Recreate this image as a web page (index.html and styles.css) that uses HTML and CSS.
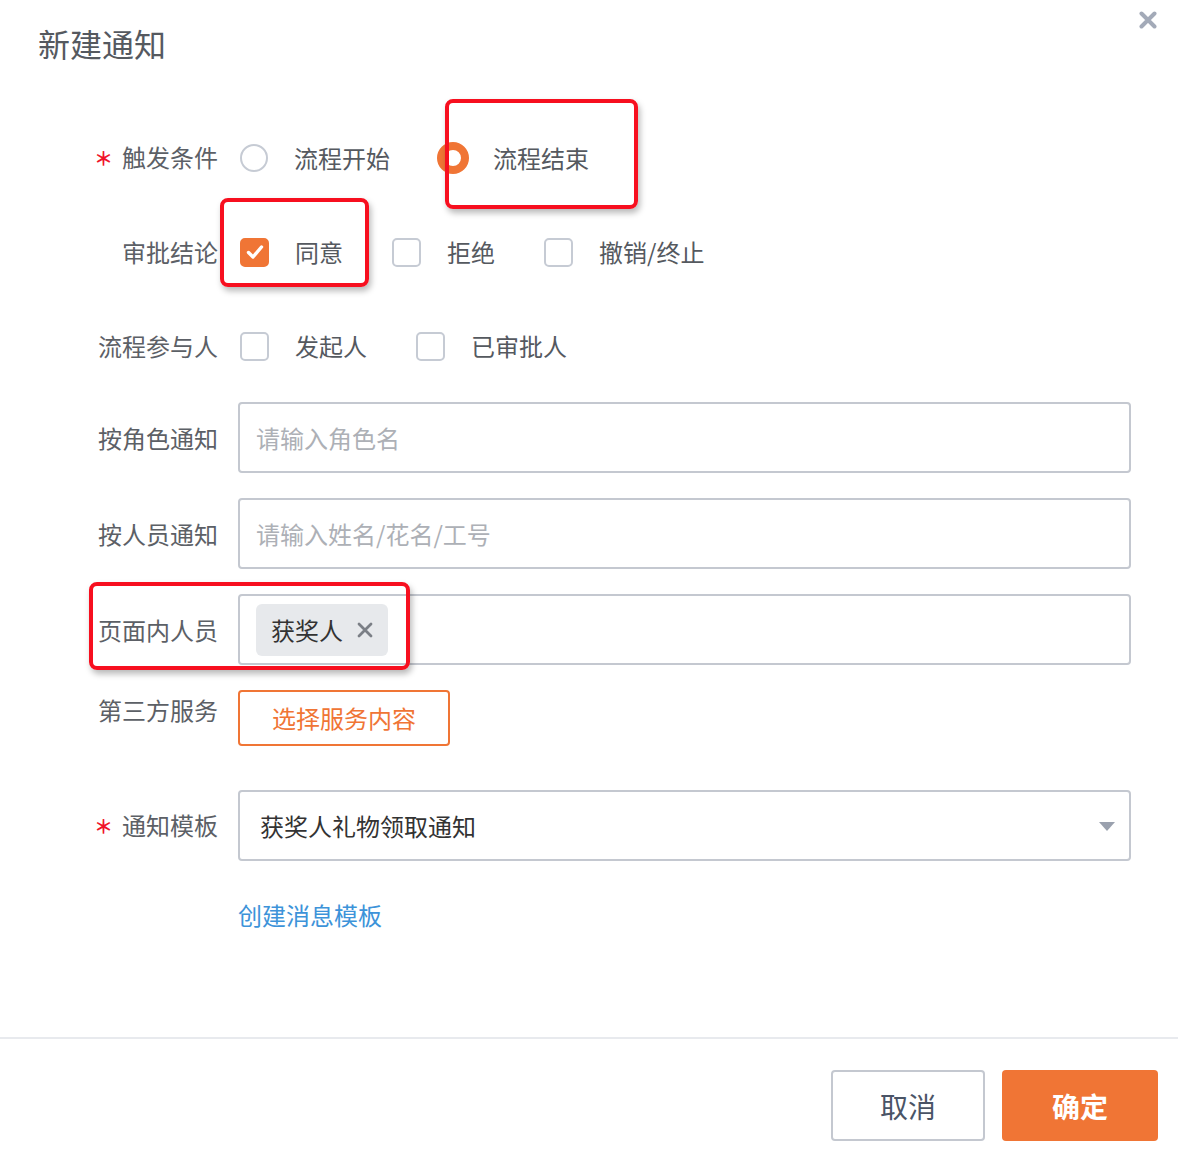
FILE: index.html
```html
<!DOCTYPE html>
<html lang="zh-CN">
<head>
<meta charset="utf-8">
<title>新建通知</title>
<link rel="stylesheet" href="styles.css">
</head>
<body>
<div class="dialog">
  <header class="head">
    <h1 class="title">新建通知</h1>
    <button class="close" type="button" aria-label="关闭">
      <svg viewBox="0 0 18 18" width="18" height="18"><path d="M2.5 2.5 L15.5 15.5 M15.5 2.5 L2.5 15.5" stroke="#a3aab8" stroke-width="4" stroke-linecap="round"/></svg>
    </button>
  </header>

  <form class="form">
    <div class="row opt-row">
      <label class="label"><span class="req">＊</span>触发条件</label>
      <div class="options">
        <span class="option"><span class="radio"></span><span class="otext">流程开始</span></span>
        <span class="option"><span class="radio checked"></span><span class="otext">流程结束</span></span>
      </div>
    </div>

    <div class="row opt-row">
      <label class="label">审批结论</label>
      <div class="options">
        <span class="option"><span class="checkbox checked"><svg viewBox="0 0 28 28" width="28" height="28"><path d="M7.5 14.5 L12 19 L20.5 9" fill="none" stroke="#fff" stroke-width="3.4" stroke-linecap="round" stroke-linejoin="round"/></svg></span><span class="otext">同意</span></span>
        <span class="option"><span class="checkbox"></span><span class="otext">拒绝</span></span>
        <span class="option"><span class="checkbox"></span><span class="otext">撤销/终止</span></span>
      </div>
    </div>

    <div class="row opt-row last-opt">
      <label class="label">流程参与人</label>
      <div class="options">
        <span class="option"><span class="checkbox"></span><span class="otext">发起人</span></span>
        <span class="option"><span class="checkbox"></span><span class="otext">已审批人</span></span>
      </div>
    </div>

    <div class="row">
      <label class="label">按角色通知</label>
      <div class="input"><span class="placeholder">请输入角色名</span></div>
    </div>

    <div class="row">
      <label class="label">按人员通知</label>
      <div class="input"><span class="placeholder">请输入姓名/花名/工号</span></div>
    </div>

    <div class="row">
      <label class="label">页面内人员</label>
      <div class="input tags">
        <span class="tag">获奖人<svg class="tag-x" viewBox="0 0 16 16" width="16" height="16"><path d="M2 2 L14 14 M14 2 L2 14" stroke="#7b7f86" stroke-width="2.8" stroke-linecap="round"/></svg></span>
      </div>
    </div>

    <div class="row top-row">
      <label class="label">第三方服务</label>
      <button class="outline-btn" type="button">选择服务内容</button>
    </div>

    <div class="row select-row">
      <label class="label"><span class="req">＊</span>通知模板</label>
      <div class="input select">
        <span class="value">获奖人礼物领取通知</span>
        <svg class="caret" viewBox="0 0 16 9" width="16" height="9"><path d="M0 0 L16 0 L8 9 Z" fill="#9aa1ae"/></svg>
      </div>
    </div>

    <div class="link-row">
      <a class="link" href="#">创建消息模板</a>
    </div>
  </form>

  <footer class="foot">
    <button class="btn cancel" type="button">取消</button>
    <button class="btn primary" type="button">确定</button>
  </footer>

  <div class="mark mark1"></div>
  <div class="mark mark2"></div>
  <div class="mark mark3"></div>
</div>
</body>
</html>
```

FILE: styles.css
```css
* { box-sizing: border-box; }

html, body {
  margin: 0;
  padding: 0;
  background: #fff;
}

body {
  font-family: "Noto Sans CJK SC", "Noto Sans", sans-serif;
  color: #5c6066;
}

.dialog {
  position: relative;
  width: 1178px;
  height: 1164px;
  background: #fff;
}

.head {
  display: flex;
  justify-content: space-between;
  align-items: flex-start;
  height: 90px;
  padding: 0 21px 0 38px;
}

.title {
  margin: 0;
  font-size: 32px;
  font-weight: 400;
  line-height: 86px;
  color: #55595f;
}

.close {
  margin-top: 11px;
  padding: 0;
  border: 0;
  background: none;
  width: 18px;
  height: 18px;
  display: block;
}
.close svg { display: block; }

.form {
  padding: 40px 47px 0 90px;
  margin: 0;
}

.row {
  display: flex;
  align-items: center;
  min-height: 71px;
  margin-bottom: 25px;
}

.opt-row {
  min-height: 56px;
  margin-bottom: 38px;
}
.opt-row.last-opt { margin-bottom: 28px; }

.top-row {
  align-items: flex-start;
  min-height: 56px;
  margin-bottom: 44px;
}

.label {
  flex: 0 0 128px;
  width: 128px;
  margin-right: 20px;
  text-align: right;
  font-size: 24px;
  line-height: 40px;
  color: #5c6066;
  white-space: nowrap;
}

.req {
  color: #f0142a;
  margin-right: 9px;
  font-size: 19px;
  font-weight: 700;
  position: relative;
  top: -1px;
}

.options {
  display: flex;
  align-items: center;
  padding-left: 2px;
}

.option {
  display: flex;
  align-items: center;
  margin-right: 49px;
}

.otext {
  font-size: 24px;
  line-height: 40px;
  color: #55595f;
  margin-left: 26px;
  white-space: nowrap;
}

.radio {
  width: 28px;
  height: 28px;
  border-radius: 50%;
  border: 2px solid #c6cbd4;
  background: #fff;
  flex: 0 0 auto;
}
.radio.checked {
  width: 32px;
  height: 32px;
  margin: 0 -2px;
  border: 8px solid #f07535;
}

.checkbox {
  width: 29px;
  height: 29px;
  border-radius: 5px;
  border: 2px solid #c6cbd4;
  background: #fff;
  flex: 0 0 auto;
  display: flex;
  align-items: center;
  justify-content: center;
}
.checkbox.checked {
  background: #f07535;
  border-color: #f07535;
}
.checkbox svg { display: block; flex: 0 0 auto; }

.input {
  flex: 1 1 auto;
  height: 71px;
  border: 2px solid #c4c8d0;
  border-radius: 4px;
  display: flex;
  align-items: center;
  padding: 0 17px 0 16px;
  font-size: 24px;
}

.placeholder {
  color: #adb0b6;
  line-height: 40px;
}

.tags { padding-left: 16px; }

.tag {
  display: flex;
  align-items: center;
  height: 52px;
  padding: 0 15px;
  border-radius: 6px;
  background: #e7e9ec;
  color: #333;
  font-size: 24px;
  line-height: 40px;
}
.tag-x {
  margin-left: 14px;
  display: block;
}

.outline-btn {
  height: 56px;
  padding: 0 32px;
  border: 2px solid #f07535;
  border-radius: 4px;
  background: #fff;
  color: #f07535;
  font-family: inherit;
  font-size: 24px;
  line-height: 40px;
}

.select-row { margin-bottom: 34px; }

.select {
  justify-content: space-between;
  padding: 0 14px 0 20px;
}
.select .value {
  color: #333;
  line-height: 40px;
}
.caret { display: block; margin-top: 1px; }

.link-row {
  padding-left: 148px;
  height: 40px;
  margin-bottom: 102px;
}

.link {
  color: #3d93d9;
  font-size: 24px;
  line-height: 40px;
  text-decoration: none;
}

.foot {
  border-top: 2px solid #e8eaee;
  display: flex;
  justify-content: flex-end;
  gap: 17px;
  padding: 31px 20px 0 0;
}

.btn {
  height: 71px;
  border-radius: 4px;
  font-family: inherit;
  font-size: 28px;
  line-height: 40px;
}
.cancel {
  width: 154px;
  border: 2px solid #c4c8d0;
  background: #fff;
  color: #4a5466;
}
.primary {
  width: 156px;
  border: 0;
  background: #f07535;
  color: #fff;
  font-weight: 700;
}

.mark {
  position: absolute;
  border: 4px solid #f70f1f;
  border-radius: 8px;
  box-shadow: 2px 4px 6px rgba(0, 0, 0, 0.28);
  pointer-events: none;
}
.mark1 { left: 445px; top: 99px; width: 193px; height: 110px; }
.mark2 { left: 220px; top: 198px; width: 149px; height: 89px; }
.mark3 { left: 89px; top: 582px; width: 321px; height: 88px; }
```
